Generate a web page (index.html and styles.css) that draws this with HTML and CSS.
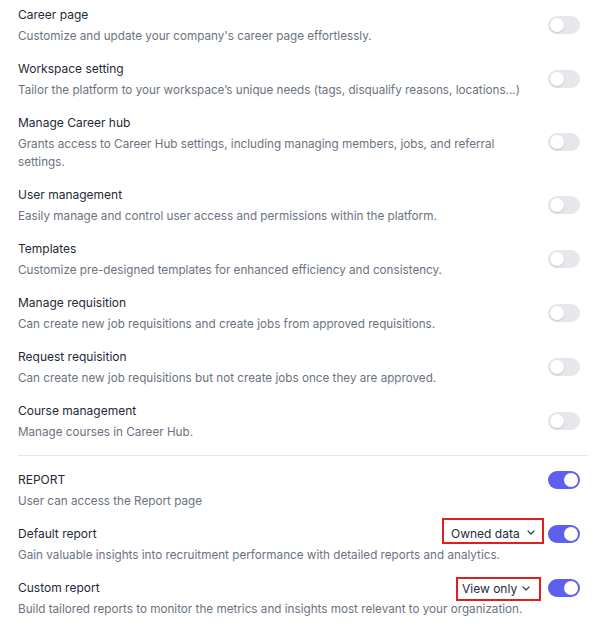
FILE: index.html
```html
<!DOCTYPE html>
<html>
<head>
<meta charset="utf-8">
<link rel="stylesheet" href="styles.css">
</head>
<body>
<div class="list">
  <div class="row">
    <div class="info">
      <div class="title">Career page</div>
      <div class="desc">Customize and update your company's career page effortlessly.</div>
    </div>
    <span class="toggle"></span>
  </div>
  <div class="row">
    <div class="info">
      <div class="title">Workspace setting</div>
      <div class="desc">Tailor the platform to your workspace’s unique needs (tags, disqualify reasons, locations...)</div>
    </div>
    <span class="toggle"></span>
  </div>
  <div class="row">
    <div class="info">
      <div class="title">Manage Career hub</div>
      <div class="desc narrow">Grants access to Career Hub settings, including managing members, jobs, and referral settings.</div>
    </div>
    <span class="toggle"></span>
  </div>
  <div class="row">
    <div class="info">
      <div class="title">User management</div>
      <div class="desc">Easily manage and control user access and permissions within the platform.</div>
    </div>
    <span class="toggle"></span>
  </div>
  <div class="row">
    <div class="info">
      <div class="title">Templates</div>
      <div class="desc">Customize pre-designed templates for enhanced efficiency and consistency.</div>
    </div>
    <span class="toggle"></span>
  </div>
  <div class="row">
    <div class="info">
      <div class="title">Manage requisition</div>
      <div class="desc">Can create new job requisitions and create jobs from approved requisitions.</div>
    </div>
    <span class="toggle"></span>
  </div>
  <div class="row">
    <div class="info">
      <div class="title">Request requisition</div>
      <div class="desc">Can create new job requisitions but not create jobs once they are approved.</div>
    </div>
    <span class="toggle"></span>
  </div>
  <div class="row">
    <div class="info">
      <div class="title">Course management</div>
      <div class="desc">Manage courses in Career Hub.</div>
    </div>
    <span class="toggle"></span>
  </div>

  <div class="divider"></div>

  <div class="row top">
    <div class="info">
      <div class="title">REPORT</div>
      <div class="desc">User can access the Report page</div>
    </div>
    <span class="toggle on"></span>
  </div>
  <div class="row top">
    <div class="info">
      <div class="title">Default report</div>
      <div class="desc">Gain valuable insights into recruitment performance with detailed reports and analytics.</div>
    </div>
    <div class="select owned">Owned data<svg width="8" height="5" viewBox="0 0 8 5"><path d="M1 1l3 3 3-3" fill="none" stroke="#374151" stroke-width="1.2" stroke-linecap="round" stroke-linejoin="round"/></svg></div>
    <span class="toggle on"></span>
  </div>
  <div class="row top">
    <div class="info">
      <div class="title">Custom report</div>
      <div class="desc">Build tailored reports to monitor the metrics and insights most relevant to your organization.</div>
    </div>
    <div class="select view">View only<svg width="8" height="5" viewBox="0 0 8 5"><path d="M1 1l3 3 3-3" fill="none" stroke="#374151" stroke-width="1.2" stroke-linecap="round" stroke-linejoin="round"/></svg></div>
    <span class="toggle on"></span>
  </div>
</div>
</body>
</html>
```

FILE: styles.css
```css
* { box-sizing: border-box; }
html, body { margin: 0; padding: 0; background: #fff; }
body {
  font-family: Inter, "Liberation Sans", sans-serif;
  color: #1f2937;
}
.list {
  margin-top: -2px;
  padding: 0 19px 0 18px;
}
.row {
  position: relative;
  display: flex;
  align-items: center;
  padding: 7px 8px 7px 0;
}
.info { flex: 1; min-width: 0; }
.title {
  font-size: 12px;
  line-height: 20px;
  color: #1f2937;
}
.desc {
  margin-top: 2px;
  font-size: 11.7px;
  line-height: 18px;
  color: #6b7280;
}
.desc.narrow { max-width: 500px; }
.toggle {
  position: relative;
  flex: none;
  width: 32px;
  height: 18px;
  border-radius: 9px;
  background: #e5e7eb;
  margin-left: 12px;
}
.toggle::after {
  content: "";
  position: absolute;
  top: 2px;
  left: 2px;
  width: 14px;
  height: 14px;
  border-radius: 50%;
  background: #fff;
  box-shadow: 0 1px 2px rgba(0,0,0,0.15);
}
.toggle.on { background: #5d5fef; }
.toggle.on::after { left: 16px; box-shadow: none; }
.row.top { align-items: flex-start; }
.row.top .toggle { margin-top: 1px; }
.select {
  position: absolute;
  display: flex;
  align-items: center;
  justify-content: space-between;
  white-space: nowrap;
  border: 2px solid #e11d1d;
  font-size: 12px;
  color: #1f2937;
}
.select svg { flex: none; }
.select.owned { right: 44px; top: 1px; height: 26px; width: 102px; padding: 4px 7px 0 7px; }
.select.owned svg { margin-top: -1px; }
.select.view { right: 47px; top: 6px; height: 24px; width: 85px; padding: 0 9px 2px 4px; }
.divider {
  height: 1px;
  background: #e5e7eb;
  margin: 7px 0 7px 0;
}
```
